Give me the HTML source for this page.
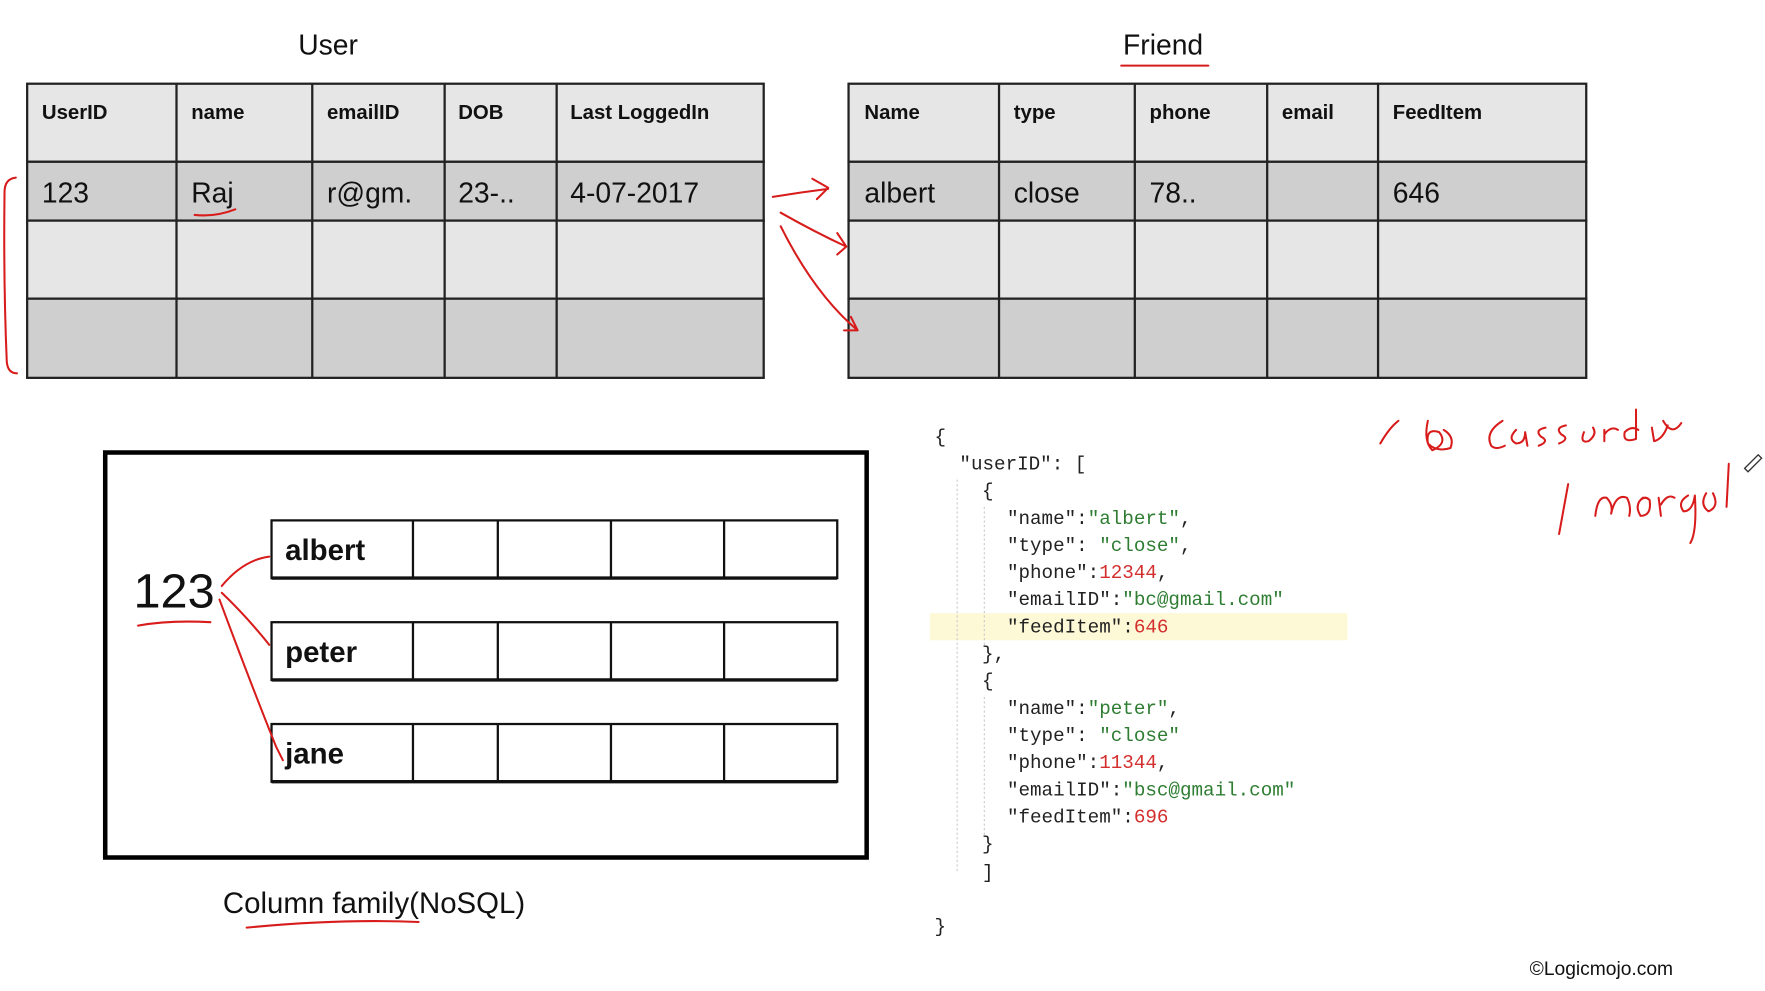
<!DOCTYPE html>
<html><head><meta charset="utf-8"><style>
html,body{margin:0;padding:0;background:#fff;width:1765px;height:991px;overflow:hidden}
svg{display:block}
.t{font-family:"Liberation Sans",sans-serif;fill:#111}
.h{font-family:"Liberation Sans",sans-serif;font-weight:bold;font-size:18px;fill:#111}
.c{font-family:"Liberation Sans",sans-serif;font-size:25px;fill:#111}
.m{font-family:"Liberation Mono",monospace;font-size:17px;fill:#222}
.g{fill:#2e7d32}.r{fill:#d32f2f}
.red{fill:none;stroke:#d81b1b;stroke-width:1.8;stroke-linecap:round;stroke-linejoin:round}
</style></head><body>
<svg width="1765" height="991" viewBox="0 0 1560 876" preserveAspectRatio="none" xmlns="http://www.w3.org/2000/svg">
<rect width="1560" height="876" fill="#fff"/>
<text class="t" x="290" y="48" font-size="25" text-anchor="middle">User</text>
<text class="t" x="1028" y="48" font-size="25" text-anchor="middle">Friend</text>
<path class="red" d="M991 58 L1068 58"/>

<g stroke="#222" stroke-width="2">
<rect x="24" y="74" width="651" height="69" fill="#e6e6e6"/>
<rect x="24" y="143" width="651" height="52" fill="#cfcfcf"/>
<rect x="24" y="195" width="651" height="69" fill="#e6e6e6"/>
<rect x="24" y="264" width="651" height="70" fill="#cfcfcf"/>
<path d="M156 74V334M276 74V334M393 74V334M492 74V334"/>
<rect x="750" y="74" width="652" height="69" fill="#e6e6e6"/>
<rect x="750" y="143" width="652" height="52" fill="#cfcfcf"/>
<rect x="750" y="195" width="652" height="69" fill="#e6e6e6"/>
<rect x="750" y="264" width="652" height="70" fill="#cfcfcf"/>
<path d="M883 74V334M1003 74V334M1120 74V334M1218 74V334"/>
</g>
<g class="h">
<text x="37" y="105">UserID</text><text x="169" y="105">name</text><text x="289" y="105">emailID</text><text x="405" y="105">DOB</text><text x="504" y="105">Last LoggedIn</text>
<text x="764" y="105">Name</text><text x="896" y="105">type</text><text x="1016" y="105">phone</text><text x="1133" y="105">email</text><text x="1231" y="105">FeedItem</text>
</g>
<g class="c">
<text x="37" y="179">123</text><text x="169" y="179">Raj</text><text x="289" y="179">r@gm.</text><text x="405" y="179">23-..</text><text x="504" y="179">4-07-2017</text>
<text x="764" y="179">albert</text><text x="896" y="179">close</text><text x="1016" y="179">78..</text><text x="1231" y="179">646</text>
</g>

<rect x="93" y="400" width="673" height="358" fill="none" stroke="#000" stroke-width="4"/>
<g fill="#fff" stroke="#111" stroke-width="2">
<rect x="240" y="460" width="500" height="51"/>
<rect x="240" y="550" width="500" height="51"/>
<rect x="240" y="640" width="500" height="51"/>
<path d="M365 460V511M440 460V511M540 460V511M640 460V511M365 550V601M440 550V601M540 550V601M640 550V601M365 640V691M440 640V691M540 640V691M640 640V691"/>
<path d="M240 511H740M240 601H740M240 691H740" stroke-width="3"/>
</g>
<g class="t" font-weight="bold" font-size="26">
<text x="252" y="495">albert</text><text x="252" y="585">peter</text><text x="252" y="675">jane</text>
</g>
<text class="t" x="118" y="537" font-size="43">123</text>
<text class="t" x="197" y="807" font-size="26">Column family(NoSQL)</text>

<rect x="822" y="542" width="369" height="24" fill="#fdf9d6"/>
<g stroke="#ccc" stroke-width="1" stroke-dasharray="2 2">
<path d="M846 424V770M870 448V570M870 616V740"/>
</g>
<g class="m">
<text x="826" y="391">{</text>
<text x="848" y="415">"userID": [</text>
<text x="868" y="439">{</text>
<text x="890" y="463">"name":<tspan class="g">"albert"</tspan>,</text>
<text x="890" y="487">"type": <tspan class="g">"close"</tspan>,</text>
<text x="890" y="511">"phone":<tspan class="r">12344</tspan>,</text>
<text x="890" y="535">"emailID":<tspan class="g">"bc@gmail.com"</tspan></text>
<text x="890" y="559">"feedItem":<tspan class="r">646</tspan></text>
<text x="868" y="583">},</text>
<text x="868" y="607">{</text>
<text x="890" y="631">"name":<tspan class="g">"peter"</tspan>,</text>
<text x="890" y="655">"type": <tspan class="g">"close"</tspan></text>
<text x="890" y="679">"phone":<tspan class="r">11344</tspan>,</text>
<text x="890" y="703">"emailID":<tspan class="g">"bsc@gmail.com"</tspan></text>
<text x="890" y="727">"feedItem":<tspan class="r">696</tspan></text>
<text x="868" y="751">}</text>
<text x="868" y="776">]</text>
<text x="826" y="824">}</text>
</g>

<text class="t" x="1352" y="862" font-size="17" fill="#333">©Logicmojo.com</text>

<path class="red" d="M14 157 Q4 158 4 170 Q3 250 6 320 Q7 330 15 330"/>
<path class="red" d="M172 190 Q190 192 208 185"/>
<path class="red" d="M683 174 Q708 170 732 167 M718 158 L732 166 L722 176"/>
<path class="red" d="M690 188 Q720 205 748 218 M740 206 L748 218 L740 225"/>
<path class="red" d="M690 200 Q720 260 758 292 M752 280 L758 292 L746 292"/>
<path class="red" d="M196 518 Q215 495 238 492"/>
<path class="red" d="M196 524 Q218 545 238 570"/>
<path class="red" d="M194 530 Q220 600 244 660 L250 672"/>
<path class="red" d="M122 553 Q150 548 186 550"/>
<path class="red" d="M218 820 Q300 812 370 815"/>
<path class="red" d="M1220 392 Q1228 378 1236 372"/>
<path class="red" d="M1262 372 Q1258 390 1266 398 Q1280 392 1272 382 Q1260 378 1262 392 Q1270 400 1282 396 Q1286 386 1276 380"/>
<path class="red" d="M1328 372 Q1312 382 1318 394 Q1322 398 1330 394 M1340 380 Q1332 388 1340 392 Q1348 392 1348 382 L1350 394 M1366 378 Q1356 380 1362 386 Q1370 390 1360 394 M1384 376 Q1374 378 1380 384 Q1388 388 1378 392 M1400 382 Q1396 392 1404 390 Q1412 384 1408 378 M1418 380 L1418 390 M1418 384 Q1424 376 1430 380 M1446 362 L1446 388 Q1434 392 1436 382 Q1442 376 1448 380 M1460 378 L1462 390 Q1470 388 1474 376 M1470 372 Q1478 386 1486 374"/>
<path class="red" d="M1386 428 L1378 472"/>
<path class="red" d="M1410 456 Q1412 438 1420 440 Q1426 446 1424 454 Q1428 436 1438 440 Q1442 448 1440 456 M1452 440 Q1444 446 1450 456 Q1460 456 1458 442 Q1454 438 1450 442 M1466 440 L1468 456 M1468 446 Q1474 436 1480 440 M1492 438 Q1482 444 1488 452 Q1496 452 1498 438 Q1500 470 1494 480 M1508 436 Q1502 446 1510 452 Q1520 448 1514 436 M1528 410 L1526 448"/>
<path d="M1542 414 L1554 402 L1557 405 L1545 417 Z" fill="none" stroke="#333" stroke-width="1.2"/>
</svg>
</body></html>
